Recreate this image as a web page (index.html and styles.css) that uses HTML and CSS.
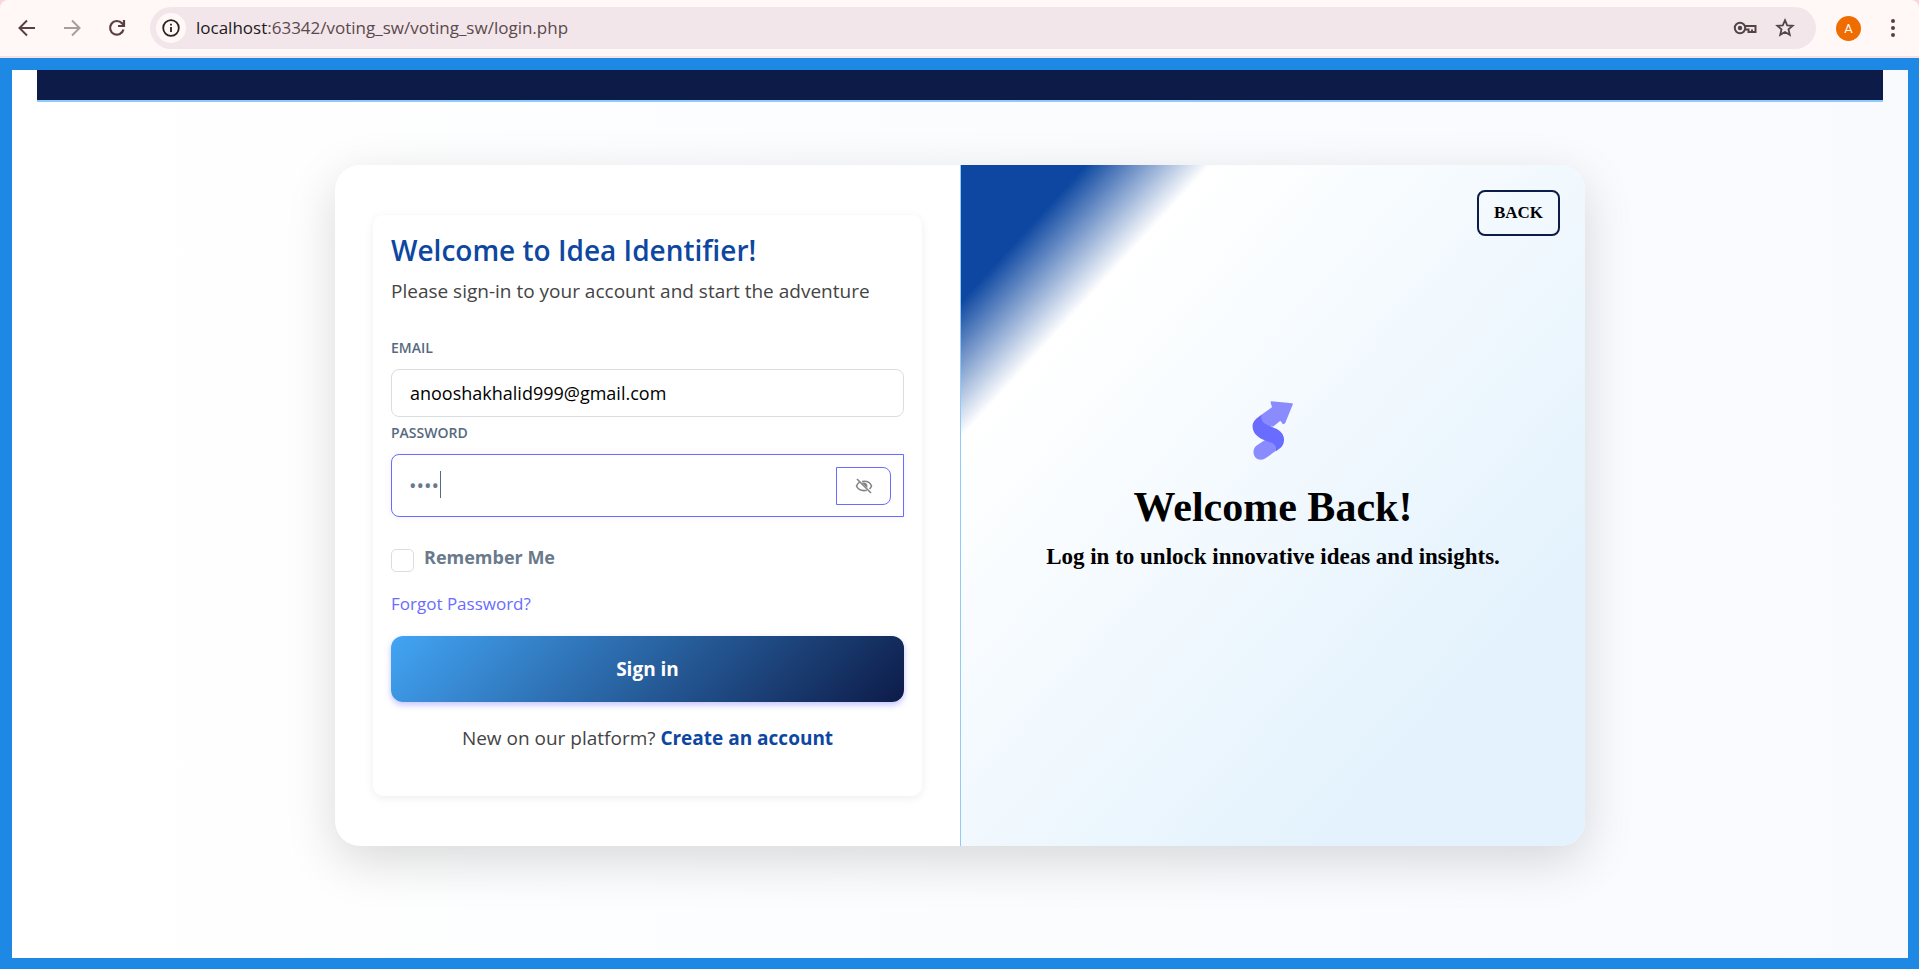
FILE: index.html
```html
<!DOCTYPE html>
<html lang="en">
<head>
<meta charset="utf-8">
<meta name="viewport" content="width=device-width, initial-scale=1">
<title>Login - Idea Identifier</title>
<link rel="stylesheet" href="styles.css">
</head>
<body>
<div class="browser-frame">
  <header class="toolbar">
    <button class="tool" type="button" aria-label="Back"><svg width="24" height="24" viewBox="0 0 24 24" fill="none" stroke="#5a4043" stroke-width="2"><path d="M20 12H5M12 4.500L4.500 12l7.500 7.500"/></svg></button>
    <button class="tool tool-muted" type="button" aria-label="Forward"><svg width="24" height="24" viewBox="0 0 24 24" fill="none" stroke="#a99c9e" stroke-width="2"><path d="M4 12h15M12 4.500l7.500 7.500-7.500 7.500"/></svg></button>
    <button class="tool" type="button" aria-label="Reload"><svg width="24" height="24" viewBox="0 0 24 24" fill="none" stroke="#5a4043" stroke-width="2.200"><path d="M18.500 13.500A6.800 6.800 0 1 1 17 7.300l1.500 1.700"/><path d="M19 4v6h-6"/></svg></button>
    <div class="address">
      <button class="site-info" type="button" aria-label="Site information"><svg width="20" height="20" viewBox="0 0 20 20" fill="none" stroke="#2b2123" stroke-width="1.800"><circle cx="10" cy="10" r="7.800"/><path d="M10 9v5M10 5.700v1.800"/></svg></button>
      <span class="url"><span class="url-host">localhost</span>:63342/voting_sw/voting_sw/login.php</span>
      <button class="tool address-tool" type="button" aria-label="Passwords"><svg width="24" height="16" viewBox="0 0 24 16" fill="none" stroke="#544347" stroke-width="2"><path d="M12 6h10.500v6h-3.500V9.500M19 12h-3.500V9.500H12"/><circle cx="7" cy="8" r="5.200"/><circle cx="7" cy="8" r="2.200" fill="#544347" stroke="none"/></svg></button>
      <button class="tool address-tool" type="button" aria-label="Bookmark this page"><svg width="22" height="22" viewBox="0 0 22 22" fill="none" stroke="#544347" stroke-width="1.800"><path d="M11 3.200l2.200 5.100 5.500.5-4.200 3.600 1.300 5.400L11 15l-4.800 2.800 1.300-5.400-4.200-3.600 5.500-.5z"/></svg></button>
    </div>
    <button class="avatar" type="button" aria-label="Profile">A</button>
    <button class="tool menu" type="button" aria-label="Menu"><svg width="6" height="20" viewBox="0 0 6 20" fill="#5a4043"><circle cx="3" cy="3" r="2"/><circle cx="3" cy="10" r="2"/><circle cx="3" cy="17" r="2"/></svg></button>
  </header>
</div>

<main class="page">
  <div class="navbar"></div>
  <div class="login">
    <section class="form-side">
      <form class="form-card">
        <h1 class="title">Welcome to Idea Identifier!</h1>
        <p class="lead">Please sign-in to your account and start the adventure</p>
        <label class="label" for="email">Email</label>
        <input class="email" id="email" type="email" value="anooshakhalid999@gmail.com">
        <label class="label" for="password">Password</label>
        <div class="password-group">
          <input class="password" id="password" type="password" value="1234">
          <span class="caret"></span>
          <button class="reveal" type="button" aria-label="Show password"><svg width="18" height="18" viewBox="0 0 18 18" fill="none" stroke="#858585" stroke-width="1.600"><path d="M2 2l14 14"/><path d="M5 4.900C3.500 5.700 2.200 7 1.500 9c1.200 3 4 4.600 7.500 4.600 1 0 1.900-.1 2.700-.4M7 4.500c5-.8 8.300 1.300 9.500 4.500-.4 1.200-1.100 2.200-2 3"/><path d="M8.500 6.400c2-.2 3.300 1.100 3.100 3z" fill="#858585"/></svg></button>
        </div>
        <div class="remember">
          <input class="check" id="remember" type="checkbox">
          <label class="remember-label" for="remember">Remember Me</label>
        </div>
        <a class="forgot" href="#">Forgot Password?</a>
        <button class="submit" type="submit">Sign in</button>
        <p class="signup">New on our platform? <a class="signup-link" href="#">Create an account</a></p>
      </form>
    </section>
    <section class="welcome-side">
      <button class="back" type="button">BACK</button>
      <svg class="logo" width="42" height="61" viewBox="68 58 126 182" aria-hidden="true">
        <path fill="#898bff" d="M127 61L188 67Q192 68 190 72L168 126Q164 132 159 128L153 120L132 137L98 136L90 106L128 79L124 66Q123 61 127 61Z"/>
        <path fill="#898bff" d="M108 177L82 194C66 205 70 236 94 237Q103 237 112 230L144 207L150 184Z"/>
        <path fill="#696cff" d="M96 103C76 114 68 126 70 140C72 160 88 172 108 179C126 185 145 190 139 211C154 202 165 194 164 174C162 154 148 146 130 139C110 132 92 124 96 103Z"/>
      </svg>
      <h2 class="welcome-title">Welcome Back!</h2>
      <p class="welcome-text">Log in to unlock innovative ideas and insights.</p>
    </section>
  </div>
</main>
</body>
</html>
```
FILE: styles.css
```css
* { box-sizing: border-box; }

body {
  margin: 0;
  min-height: 100vh;
  display: flex;
  flex-direction: column;
  font-family: "Open Sans", "Noto Sans", sans-serif;
  color: #444;
}

button, input { font-family: inherit; }
h1, h2, p { margin: 0; }
a { text-decoration: none; }

/* Browser toolbar */
.browser-frame { background: #fbd5dd; }

.toolbar {
  display: flex;
  align-items: center;
  height: 58px;
  padding: 0 14px 0 15px;
  background: #fff8f6;
  border-bottom: 2px solid #f8dfe6;
  border-radius: 8px 8px 0 0;
}

.tool {
  display: flex;
  align-items: center;
  justify-content: center;
  width: 24px;
  margin-right: 21px;
  padding: 0;
  border: 0;
  background: none;
}

.address {
  flex: 1;
  display: flex;
  align-items: center;
  height: 42px;
  padding: 0 19px 0 6px;
  border-radius: 21px;
  background: #f2e6ea;
}

.site-info {
  display: flex;
  align-items: center;
  justify-content: center;
  width: 30px;
  height: 30px;
  margin-right: 10px;
  padding: 0;
  border: 0;
  border-radius: 50%;
  background: #fff8f6;
}

.url {
  flex: 1;
  font-size: 17px;
  line-height: 24px;
  color: #5b494d;
}

.url-host { color: #201a1b; }
.address-tool { margin: 0 0 0 16px; }

.avatar {
  width: 25px;
  height: 25px;
  margin: 0 20px;
  padding: 0;
  border: 0;
  border-radius: 50%;
  background: #ef6c00;
  color: #fff;
  font-family: Roboto, sans-serif;
  font-size: 13px;
}

.menu { margin-right: 0; }

/* Page */
.page {
  flex: 1;
  padding-bottom: 48px;
  border: solid #1e88e5;
  border-width: 12px 11px 11px 12px;
  background: linear-gradient(90deg, #fff, #f8fafe);
}

.navbar {
  height: 32px;
  margin: 0 25px;
  background: #0d1b48;
  border-bottom: 2px solid #90caf9;
}

.login {
  display: grid;
  grid-template-columns: 1fr 1fr;
  max-width: 1250px;
  margin: 63px auto 0;
  border-radius: 25px;
  overflow: hidden;
  background: #fff;
  box-shadow: 0 15px 50px rgba(0, 0, 0, 0.15);
}

.form-side { padding: 50px 38px; }

.form-card {
  display: flex;
  flex-direction: column;
  padding: 14px 18px 42px;
  border-radius: 10px;
  box-shadow: 0 2px 8px rgba(67, 89, 113, 0.1);
}

.title {
  font-size: 28px;
  font-weight: 600;
  line-height: 42px;
  color: #0d47a1;
}

.lead {
  margin: 4px 0 30px;
  font-size: 19px;
  line-height: 32px;
}

.label {
  font-size: 14px;
  font-weight: 600;
  line-height: 22px;
  text-transform: uppercase;
  color: #566a7f;
}

.email {
  width: 100%;
  height: 48px;
  margin: 10px 0 5px;
  padding: 0 18px;
  border: 1px solid #d9dee3;
  border-radius: 8px;
  background: #fff;
  color: #000;
  font-size: 18px;
}

.password-group {
  position: relative;
  display: flex;
  align-items: center;
  height: 63px;
  margin-top: 10px;
  padding: 0 12px 0 17px;
  border: 1px solid #696cff;
  border-radius: 8px 0 0 8px;
  box-shadow: 0 0 6px rgba(105, 108, 255, 0.1);
}

.password {
  flex: 1;
  min-width: 0;
  padding: 0;
  border: 0;
  outline: 0;
  background: none;
  color: #697a8d;
  font-size: 20px;
}

.caret {
  position: absolute;
  left: 48px;
  top: 16px;
  width: 1px;
  height: 27px;
  background: #566a7f;
}

.reveal {
  display: flex;
  align-items: center;
  justify-content: center;
  width: 55px;
  height: 38px;
  padding: 0;
  border: 1px solid #696cff;
  border-radius: 0 8px 8px 0;
  background: #fff;
}

.remember {
  display: flex;
  gap: 10px;
  align-items: flex-start;
  height: 40px;
  margin-top: 26px;
}

.check {
  appearance: none;
  width: 23px;
  height: 23px;
  margin: 6px 0 0;
  border: 1px solid #d9dee3;
  border-radius: 5px;
  background: #fff;
}

.remember-label {
  font-size: 18px;
  font-weight: 700;
  line-height: 28px;
  color: #697a8d;
}

.forgot {
  align-self: flex-start;
  margin: 7px 0 18px;
  font-size: 17px;
  line-height: 28px;
  color: #696cff;
}

.submit {
  height: 66px;
  border: 0;
  border-radius: 12px;
  background: linear-gradient(135deg, #42a5f5, #0d1b48);
  box-shadow: 0 3px 6px rgba(105, 108, 255, 0.4);
  color: #fff;
  font-size: 19px;
  font-weight: 700;
}

.signup {
  margin-top: 20px;
  font-size: 19px;
  line-height: 32px;
  text-align: center;
}

.signup-link { font-weight: 700; color: #0d47a1; }

/* Welcome panel */
.welcome-side {
  position: relative;
  display: flex;
  flex-direction: column;
  align-items: center;
  justify-content: center;
  padding-bottom: 38px;
  border-left: 1px solid #90caf9;
  background: linear-gradient(to bottom right, #0d47a1 10%, #fff 20%, #e3f2fd 80%);
  color: #000;
  font-family: "Liberation Serif", serif;
  font-weight: 700;
}

.back {
  position: absolute;
  top: 25px;
  right: 25px;
  width: 83px;
  height: 46px;
  padding: 0;
  border: 2px solid #0d1b48;
  border-radius: 8px;
  background: none;
  color: #000;
  font-family: inherit;
  font-size: 17px;
  font-weight: 700;
}

.welcome-title {
  margin-top: 20px;
  font-size: 42px;
  line-height: 52px;
}

.welcome-text {
  margin-top: 8px;
  font-size: 23px;
  line-height: 32px;
}
```
